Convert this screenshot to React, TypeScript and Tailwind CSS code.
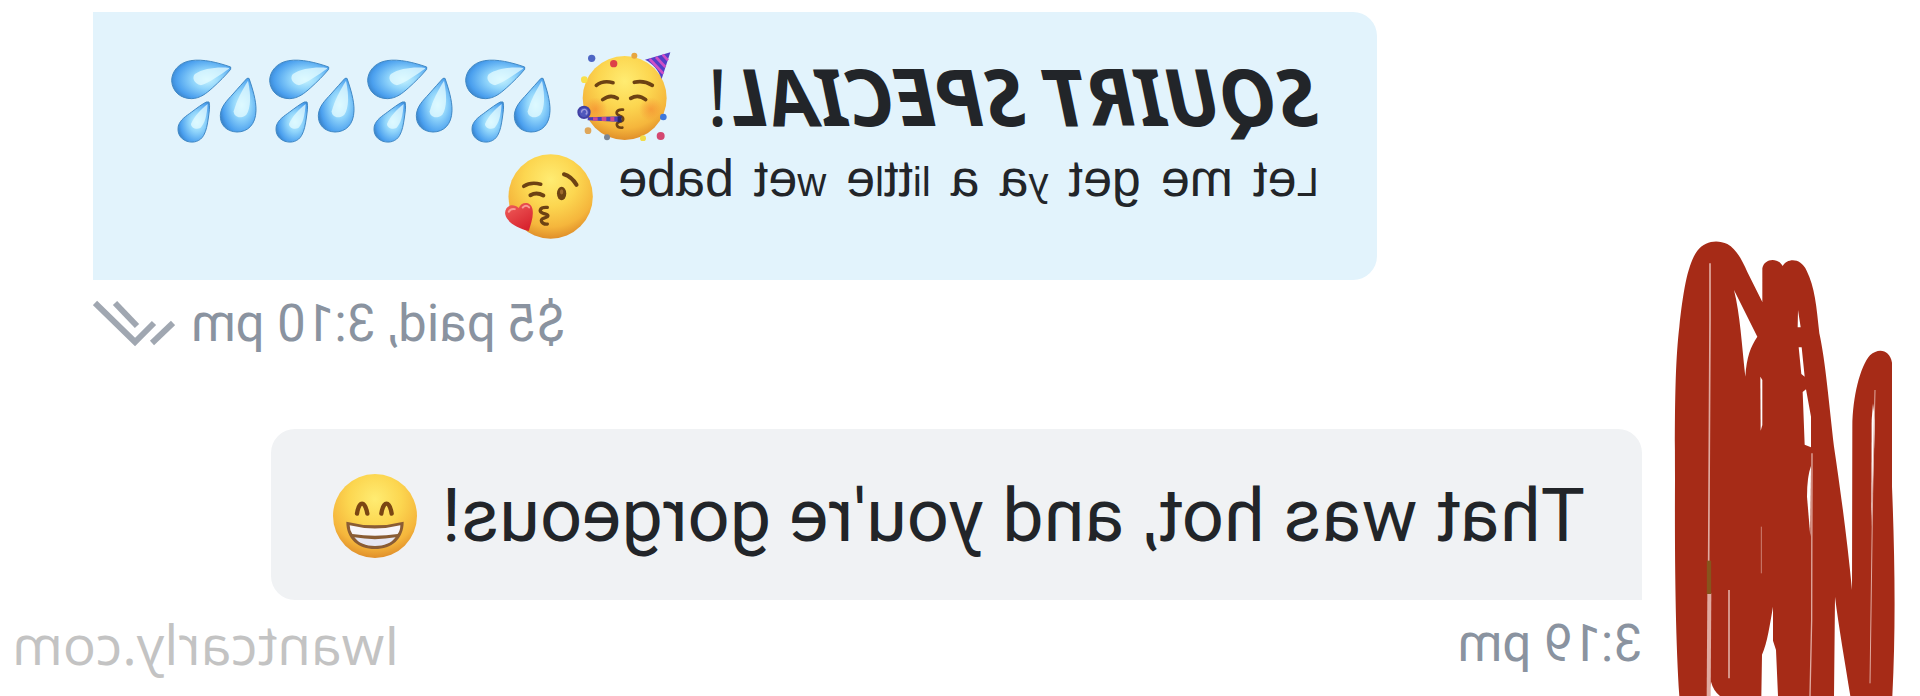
import type { ReactNode } from "react";

function Emoji({ label, box, className, children }: { label: string; box: string; className: string; children: ReactNode }) {
  return (
    <svg role="img" aria-label={label} viewBox={box} className={`shrink-0 -scale-x-100 ${className}`}>
      {children}
    </svg>
  );
}

function Gradients() {
  return (
    <svg className="absolute size-0" aria-hidden="true">
      <defs>
        <radialGradient id="face" cx="0.5" cy="0.3" r="0.7">
          <stop offset="0" stopColor="#ffec72" />
          <stop offset="0.45" stopColor="#fcd650" />
          <stop offset="0.8" stopColor="#f5b63c" />
          <stop offset="1" stopColor="#e08f2a" />
        </radialGradient>
        <radialGradient id="drop" cx="0.6" cy="0.5" r="0.62">
          <stop offset="0" stopColor="#c9f5ff" />
          <stop offset="0.4" stopColor="#8fd4fb" />
          <stop offset="0.85" stopColor="#4a9fee" />
          <stop offset="1" stopColor="#3c87cf" />
        </radialGradient>
        <radialGradient id="blush">
          <stop offset="0" stopColor="#f5852f" stopOpacity="0.6" />
          <stop offset="1" stopColor="#f5852f" stopOpacity="0" />
        </radialGradient>
        <linearGradient id="heart" x1="0" y1="0" x2="0.6" y2="1">
          <stop offset="0" stopColor="#f0605c" />
          <stop offset="1" stopColor="#d8242f" />
        </linearGradient>
      </defs>
    </svg>
  );
}

function Droplets() {
  return (
    <Emoji label="sweat droplets" box="30 40 294 258" className="h-[86px] w-[98px]">
      <g fill="url(#drop)" stroke="#4088c4" strokeWidth="3" strokeLinejoin="round">
        <path d="M215 67C178 54 132 42 95 48C58 54 38 82 38 108C40 142 66 162 98 162C124 161 142 146 160 130C180 112 200 92 215 74Z" />
        <path d="M270 101C280 130 292 168 291 198C290 240 266 262 234 262C202 261 183 240 184 212C186 184 204 168 222 148C238 130 252 114 264 101Z" />
        <path d="M150 172C154 186 150 204 148 220C145 240 142 258 134 272C124 290 104 296 84 290C62 282 54 264 58 244C64 224 82 214 98 202C114 190 130 178 142 172Z" />
      </g>
      <g fill="#e4fbff">
        <path d="M210 70C176 66 132 72 108 88C98 98 104 116 126 122C154 112 184 90 210 72Z" opacity="0.75" />
        <path d="M267 108C276 150 276 190 262 210C244 226 224 216 224 200C232 168 250 136 267 108Z" opacity="0.75" />
        <path d="M146 178C144 210 138 236 124 250C112 256 96 250 96 238C106 214 126 194 146 178Z" opacity="0.75" />
      </g>
    </Emoji>
  );
}

function PartyFace() {
  return (
    <Emoji label="partying face" box="50 30 282 270" className="h-[90px] w-[94px]">
      <circle cx="193" cy="171" r="126" fill="url(#face)" />
      <circle cx="105" cy="205" r="36" fill="url(#blush)" />
      <circle cx="272" cy="205" r="36" fill="url(#blush)" />
      <g fill="none" stroke="#6d4213" strokeWidth="11" strokeLinecap="round">
        <path d="M108 133Q128 117 158 125" />
        <path d="M222 124Q250 117 276 133" />
        <path d="M127 176Q150 158 171 172" />
        <path d="M211 172Q234 158 256 176" />
        <path d="M188 206C168 204 162 220 178 224C192 228 192 240 178 242C164 246 168 262 186 260" strokeWidth="8" />
      </g>
      <path d="M82 229L182 226V243L82 238Z" fill="#4a3fb4" />
      <path d="M98 229h14v10H98zM124 228h14v12h-14zM150 228h12v13h-12z" fill="#cb4a91" />
      <path d="M172 226h12v18h-12z" fill="#292767" />
      <circle cx="71" cy="214" r="17" fill="#5058bd" stroke="#4140a4" strokeWidth="6" />
      <path d="M64 215a8 8 0 1 1 12 5" fill="none" stroke="#a09bdc" strokeWidth="4" />
      <path d="M330 34L254 56C278 68 294 86 304 114Z" fill="#533fc8" />
      <g stroke="#cf4fc6" strokeWidth="8">
        <path d="M268 54L309 98" />
        <path d="M287 48L315 78" />
        <path d="M307 41L323 58" />
      </g>
      <circle cx="94" cy="52" r="11" fill="#4e66c4" />
      <circle cx="160" cy="68" r="11" fill="#dd4048" />
      <circle cx="222" cy="44" r="9" fill="#e7a640" />
      <circle cx="72" cy="116" r="10" fill="#f8e04a" />
      <circle cx="309" cy="228" r="10" fill="#3d78dd" />
      <circle cx="301" cy="285" r="12" fill="#d44770" />
      <circle cx="248" cy="292" r="9" fill="#f3dc47" />
      <circle cx="140" cy="289" r="9" fill="#7a8494" />
      <circle cx="83" cy="269" r="10" fill="#dfa75a" />
    </Emoji>
  );
}

function KissFace() {
  return (
    <Emoji label="face blowing a kiss" box="54 36 270 262" className="h-[87px] w-[90px]">
      <circle cx="194" cy="167" r="127" fill="url(#face)" />
      <g fill="none" stroke="#6d4213" strokeLinecap="round">
        <path d="M113 136Q134 122 164 130" strokeWidth="11" />
        <path d="M234 100Q256 106 272 132" strokeWidth="12" />
        <path d="M133 163Q152 152 172 164" strokeWidth="12" />
        <path d="M184 200C160 198 156 214 172 218C190 222 190 228 174 232C158 236 168 252 184 250" strokeWidth="10" />
      </g>
      <ellipse cx="227" cy="158" rx="14" ry="20" fill="#6d4213" />
      <ellipse cx="227" cy="153" rx="5" ry="8" fill="#a06a2c" />
      <path d="M128 271C96 262 62 246 57 220C54 196 80 184 98 202C104 182 134 180 139 204C144 226 134 250 128 271Z" fill="url(#heart)" />
      <path d="M68 213Q74 202 86 205M110 200Q120 190 129 200" fill="none" stroke="#f99a93" strokeWidth="6" strokeLinecap="round" />
    </Emoji>
  );
}

function GrinFace() {
  return (
    <Emoji label="beaming face" box="34 36 256 258" className="size-[86px]">
      <circle cx="162" cy="165" r="126" fill="url(#face)" />
      <g fill="none" stroke="#7a4613" strokeWidth="13" strokeLinecap="round">
        <path d="M108 158C114 118 132 118 139 158" />
        <path d="M181 158C187 118 206 118 212 158" />
      </g>
      <path d="M76 182Q162 204 248 182C248 234 212 264 162 264C112 264 76 234 76 182Z" fill="#8a5c34" />
      <path d="M86 193Q162 212 238 193Q238 210 230 219Q162 230 94 219Q86 208 86 193Z" fill="#f7f5fa" />
      <path d="M100 229Q162 240 224 229C210 247 190 255 162 255C134 255 114 247 100 229Z" fill="#e6e6f2" />
    </Emoji>
  );
}

function DoubleCheck() {
  return (
    <svg role="img" aria-label="Read" viewBox="0 0 82 48" className="h-12 w-[82px] -scale-x-100" fill="none" stroke="#a0a7b1" strokeWidth="6">
      <path d="M2 3L42 42L61 23" />
      <path d="M22 3L44 26" />
      <path d="M59 43L80 23" />
    </svg>
  );
}

function Scribble() {
  return (
    <svg aria-hidden="true" viewBox="6 0 834 1428" className="h-[476px] w-[278px] -scale-x-100">
      <path
        fill="#a62b17"
        d="M118 1428C106 1250 104 1000 105 780C104 560 106 420 118 320C130 210 144 130 172 92C196 62 232 58 262 72C290 88 306 120 322 156L367 246V145C372 116 412 110 428 138C442 114 482 112 500 152C524 200 530 260 538 340C556 420 568 560 582 680C600 800 622 960 636 1110L637 620C638 530 660 440 690 406C716 382 750 390 756 428V800C764 1000 768 1220 757 1428Z"
      />
      <g fill="#fff">
        <path d="M282 210L352 350C332 380 320 410 316 470C306 380 300 280 282 210Z" />
        <path d="M474 270L482 322H473ZM476 382H485L494 470L484 462ZM488 516L498 508L513 590V682L494 674Z" />
        <path d="M513 738L511 950L501 830Q501 770 513 738Z" />
        <path d="M361 470L367 480V615L362 632Z" />
        <path d="M699 550L705 600L698 810L694 920L695 600Z" />
        <path d="M585 1130C596 1220 614 1320 631 1428H582Z" />
        <path d="M399 1160L399 1262L408 1290L414 1428H364L366 1304C382 1270 390 1210 399 1160Z" />
        <path d="M213 1385Q220 1412 240 1428H206Z" />
      </g>
      <g fill="none" stroke="#e0aaa0">
        <path d="M210 130V300L206 1025" strokeWidth="5" />
        <path d="M208 1120L206 1428" strokeWidth="12" />
        <path d="M267 1110V1375" strokeWidth="5" />
        <path d="M516 700L515 1200L510 1428" strokeWidth="4" />
        <path d="M705 510L698 820L690 1390" strokeWidth="3" />
        <path d="M364 920V1060" strokeWidth="2" />
      </g>
      <path d="M207 1022V1122" stroke="#87541c" strokeWidth="13" />
    </svg>
  );
}

function Small({ children }: { children: ReactNode }) {
  return <span className="text-[40px]">{children}</span>;
}

export default function App() {
  return (
    <main className="flex min-h-screen -scale-x-100 overflow-hidden bg-white font-[Roboto,'Liberation_Sans',sans-serif] whitespace-nowrap text-[#222529]">
      <Gradients />
      <aside className="flex w-[278px] shrink-0 flex-col justify-end">
        <Scribble />
      </aside>
      <div className="flex grow flex-col pt-3">
        <article className="mr-[93px] flex flex-col items-end">
          <div className="rounded-l-3xl bg-[#e2f3fc] pt-9 pr-[76px] pb-8 pl-[58px]">
            <div className="flex h-24 items-center">
              <h1 className="mr-9 font-['Noto_Sans','Open_Sans',sans-serif] text-[78px] leading-[96px]">
                <b className="font-bold italic">SQUIRT SPECIAL</b>!
              </h1>
              <PartyFace />
              <div className="ml-4 flex self-end">
                <Droplets />
                <Droplets />
                <Droplets />
                <Droplets />
              </div>
            </div>
            <div className="flex h-26 items-center">
              <p className="mr-6 flex items-baseline gap-5 self-start font-['Liberation_Sans',sans-serif] text-[52px] leading-[68px]">
                <span><Small>L</Small>et</span>{" "}
                <span>me</span>{" "}
                <span>get</span>{" "}
                <span><Small>y</Small>a</span>{" "}
                <span>a</span>{" "}
                <span><Small>li</Small>tt<Small>l</Small>e</span>{" "}
                <span><Small>w</Small>et</span>{" "}
                <span>babe</span>
              </p>
              <KissFace />
            </div>
          </div>
          <footer className="mt-3 flex items-center gap-4 text-[51px] leading-[64px] text-[#8a93a0]">
            $5 paid, 3:10 pm
            <DoubleCheck />
          </footer>
        </article>
        <article className="mt-[73px] flex flex-col items-start">
          <div className="flex items-center gap-6 rounded-3xl rounded-bl-none bg-[#f0f2f4] pt-8 pr-[61px] pb-[29px] pl-[57px]">
            <p className="text-[74px] leading-[110px]">That was hot, and you're gorgeous!</p>
            <GrinFace />
          </div>
          <footer className="mt-3 flex items-center justify-between self-stretch pr-3 text-[51px] leading-[64px] text-[#8a93a0]">
            3:19 pm
            <a href="#home" className="font-['Open_Sans','Noto_Sans',sans-serif] text-[55px] text-[#c3c3c3]">
              Iwantcarly.com
            </a>
          </footer>
        </article>
      </div>
    </main>
  );
}
